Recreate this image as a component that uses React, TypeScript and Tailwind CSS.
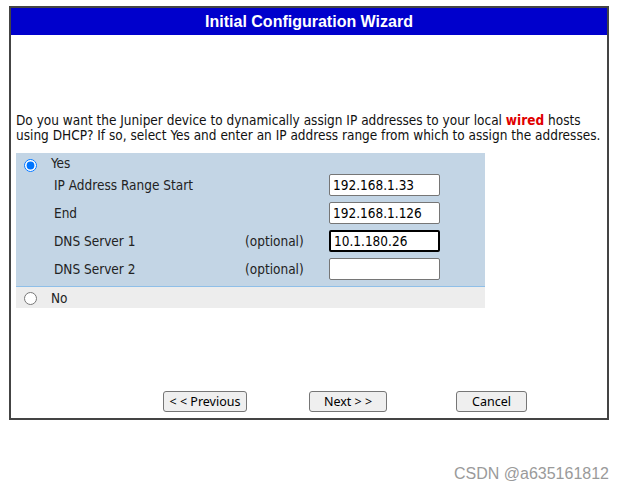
import React from 'react';

const bodyFont = { fontFamily: '"DejaVu Sans Condensed", "DejaVu Sans", sans-serif' };

interface FieldRowProps {
  label: string;
  optional?: boolean;
  value: string;
  focused?: boolean;
}

function FieldRow({ label, optional, value, focused }: FieldRowProps) {
  return (
    <div className="grid h-[28px] grid-cols-[38px_191px_84px_111px] items-center">
      <div />
      <div className="text-[13.5px] text-[#222]">{label}</div>
      <div className="text-[13.5px] text-[#222]">{optional ? '(optional)' : ''}</div>
      <input
        defaultValue={value}
        className={`h-[22px] w-[111px] rounded-[2px] bg-white px-[3px] text-[13.5px] text-black outline-none ${
          focused ? 'border-2 border-black px-[2px]' : 'border border-[#767676]'
        }`}
      />
    </div>
  );
}

export default function App() {
  return (
    <div className="min-h-[489px] w-[623px] bg-white pl-[9px] pt-[6px]" style={bodyFont}>
      <div className="flex h-[414px] w-[600px] flex-col border-2 border-[#444]">
        <div
          className="flex h-[27px] items-center justify-center bg-[#0000cc] text-[16px] font-bold text-white"
          style={{ fontFamily: '"Liberation Sans", Arial, sans-serif' }}
        >
          Initial Configuration Wizard
        </div>

        <p className="mt-[78px] pl-[5px] text-[13.5px] leading-[15px] text-[#111]">
          Do you want the Juniper device to dynamically assign IP addresses to your local{' '}
          <span className="font-bold text-[#e00000]">wired</span> hosts
          <br />
          using DHCP? If so, select Yes and enter an IP address range from which to assign the addresses.
        </p>

        <div className="ml-[5px] mt-[10px] w-[469px]">
          <div className="border-b border-[#8fbfe8] bg-[#c3d5e5] pb-[3px]">
            <label className="flex h-[18px] items-center pt-[3px]">
              <input type="radio" name="dhcp" defaultChecked className="ml-[8px] mr-[14px] mt-[3px] h-[13px] w-[13px] accent-[#0075ff]" />
              <span className="text-[13.5px] leading-[15px] text-[#222]">Yes</span>
            </label>
            <FieldRow label="IP Address Range Start" value="192.168.1.33" />
            <FieldRow label="End" value="192.168.1.126" />
            <FieldRow label="DNS Server 1" optional value="10.1.180.26" focused />
            <FieldRow label="DNS Server 2" optional value="" />
          </div>
          <label className="flex h-[21px] items-center bg-[#ededed] pt-[1px]">
            <input type="radio" name="dhcp" className="ml-[8px] mr-[14px] h-[13px] w-[13px]" />
            <span className="text-[13.5px] text-[#222]">No</span>
          </label>
        </div>

        <div className="mt-auto mb-[6px] flex" style={{ fontFamily: '"Noto Sans", "Open Sans", sans-serif' }}>
          <button className="ml-[152px] h-[21px] w-[84px] rounded-[3px] border border-[#767676] bg-[#efefef] pt-[1px] text-[12.5px] leading-none text-black">
            &lt; &lt; Previous
          </button>
          <button className="ml-[62px] h-[21px] w-[78px] rounded-[3px] border border-[#767676] bg-[#efefef] pt-[1px] text-[12.5px] leading-none text-black">
            Next &gt; &gt;
          </button>
          <button className="ml-[69px] h-[21px] w-[71px] rounded-[3px] border border-[#767676] bg-[#efefef] pt-[1px] text-[12.5px] leading-none text-black">
            Cancel
          </button>
        </div>
      </div>

      <div
        className="mt-[42px] w-[600px] text-right text-[16px] text-[#9a9a9a]"
        style={{ fontFamily: '"Liberation Sans", Arial, sans-serif' }}
      >
        CSDN @a635161812
      </div>
    </div>
  );
}
